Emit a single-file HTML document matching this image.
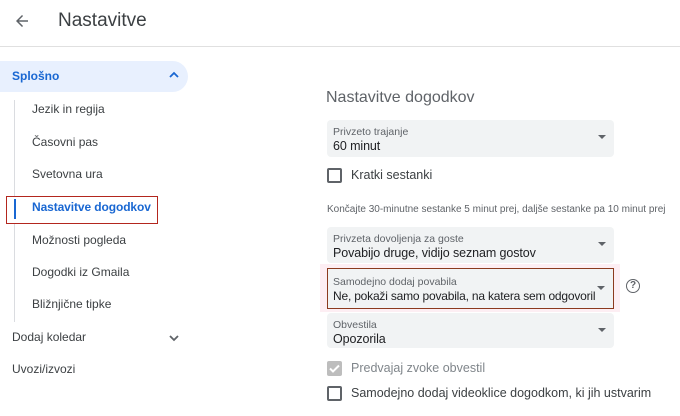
<!DOCTYPE html><html><head><style>
*{margin:0;padding:0;box-sizing:border-box}
body{width:680px;height:416px;overflow:hidden;background:#fff;font-family:"Liberation Sans",sans-serif;color:#3c4043;position:relative}
.a{position:absolute}
.it{position:absolute;left:32px;font-size:12px;color:#3c4043}
.sel{position:absolute;left:327px;width:287px;background:#f1f3f4;border-radius:4px}
.sel .l{position:absolute;left:6px;top:6px;font-size:10.5px;color:#5f6368}
.sel .v{position:absolute;left:6px;top:19px;font-size:12.5px;color:#202124;white-space:nowrap;letter-spacing:-0.1px}
.sel .c{position:absolute;right:8px;top:15px;width:0;height:0;border-left:4px solid transparent;border-right:4px solid transparent;border-top:4px solid #5f6368}
.cb{position:absolute;left:327px;width:15px;height:15px;border:2px solid #5f6368;border-radius:2px}
.ct{position:absolute;left:351px;font-size:12.5px;color:#3c4043;white-space:nowrap}
</style></head><body>
<svg class="a" style="left:13px;top:12px" width="18" height="18" viewBox="0 0 24 24"><path d="M20 11H7.8l5.6-5.6L12 4l-8 8 8 8 1.4-1.4L7.8 13H20z" fill="#5f6368"/></svg>
<div class="a" style="left:58px;top:10px;font-size:19px;color:#3c4043">Nastavitve</div>
<div class="a" style="left:0;top:46px;width:680px;height:1px;background:#e0e0e0"></div>
<div class="a" style="left:0;top:61px;width:188px;height:31px;background:#e8f0fe;border-radius:0 16px 16px 0"></div>
<div class="a" style="left:12px;top:69px;font-size:12px;color:#1967d2;font-weight:bold">Splošno</div>
<svg class="a" style="left:168px;top:71px" width="12" height="8" viewBox="0 0 12 8"><path d="M2 6l4-4 4 4" stroke="#1967d2" stroke-width="1.8" fill="none"/></svg>
<div class="a" style="left:14px;top:100px;width:1px;height:222px;background:#dadce0"></div>
<div class="it" style="top:102px">Jezik in regija</div>
<div class="it" style="top:135px">Časovni pas</div>
<div class="it" style="top:167px">Svetovna ura</div>
<div class="a" style="left:6px;top:196px;width:152px;height:28px;border:1.5px solid #b3261e;background:#fff"></div>
<div class="a" style="left:14px;top:199px;width:2px;height:20px;background:#1967d2"></div>
<div class="it" style="top:200px;color:#1967d2;font-weight:bold;letter-spacing:-0.1px">Nastavitve dogodkov</div>
<div class="it" style="top:233px">Možnosti pogleda</div>
<div class="it" style="top:265px">Dogodki iz Gmaila</div>
<div class="it" style="top:297px">Bližnjične tipke</div>
<div class="a" style="left:12px;top:330px;font-size:12px">Dodaj koledar</div>
<svg class="a" style="left:168px;top:334px" width="12" height="8" viewBox="0 0 12 8"><path d="M2 2l4 4 4-4" stroke="#5f6368" stroke-width="1.8" fill="none"/></svg>
<div class="a" style="left:12px;top:362px;font-size:12px">Uvozi/izvozi</div>

<div class="a" style="left:326px;top:89px;font-size:16px;color:#5f6368">Nastavitve dogodkov</div>
<div class="sel" style="top:120px;height:37px"><div class="l">Privzeto trajanje</div><div class="v">60 minut</div><div class="c"></div></div>
<div class="cb" style="top:168px"></div><div class="ct" style="top:168px">Kratki sestanki</div>
<div class="a" style="left:327px;top:204px;font-size:10px;color:#5f6368;white-space:nowrap">Končajte 30-minutne sestanke 5 minut prej, daljše sestanke pa 10 minut prej</div>
<div class="sel" style="top:227px;height:36px"><div class="l">Privzeta dovoljenja za goste</div><div class="v">Povabijo druge, vidijo seznam gostov</div><div class="c"></div></div>
<div class="a" style="left:320px;top:264px;width:300px;height:48px;background:#fdeef3"></div>
<div class="sel" style="top:268px;height:41px;border:1.5px solid #8b3a1e;border-radius:0"><div class="l" style="left:5px;top:7px">Samodejno dodaj povabila</div><div class="v" style="left:5px;top:20px;font-size:12px;letter-spacing:-0.2px">Ne, pokaži samo povabila, na katera sem odgovoril</div><div class="c" style="top:17px"></div></div>
<div class="a" style="left:626px;top:279px;width:14px;height:14px;border:1.5px solid #5f6368;border-radius:50%;font-size:10px;text-align:center;line-height:11px;color:#5f6368;font-weight:bold">?</div>
<div class="sel" style="top:313px;height:35px"><div class="l">Obvestila</div><div class="v">Opozorila</div><div class="c"></div></div>
<div class="a" style="left:327px;top:361px;width:15px;height:15px;background:#bdbdbd;border-radius:2px"></div>
<svg class="a" style="left:327px;top:361px" width="15" height="15" viewBox="0 0 15 15"><path d="M3 7.5l3 3 6-6" stroke="#fff" stroke-width="2" fill="none"/></svg>
<div class="ct" style="top:361px;color:#80868b">Predvajaj zvoke obvestil</div>
<div class="cb" style="top:386px"></div><div class="ct" style="top:386px">Samodejno dodaj videoklice dogodkom, ki jih ustvarim</div>
</body></html>
